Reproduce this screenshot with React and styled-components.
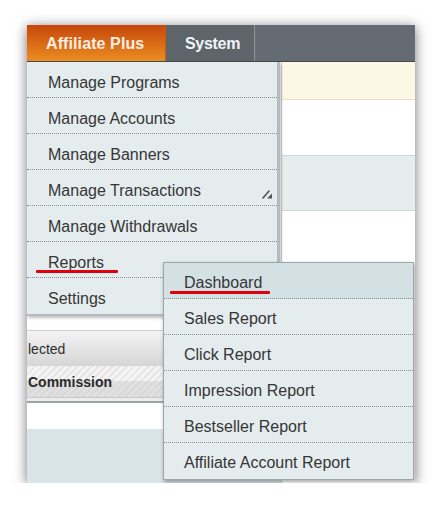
import styled, { createGlobalStyle } from 'styled-components'

const GlobalStyle = createGlobalStyle`
    html, body {
        margin: 0;
        padding: 0;
        background: #ffffff;
        font-family: 'Liberation Sans', Arial, sans-serif;
    }
`

const mainItems = [
    'Manage Programs',
    'Manage Accounts',
    'Manage Banners',
    'Manage Transactions',
    'Manage Withdrawals',
    'Reports',
    'Settings',
]

const reportItems = [
    'Dashboard',
    'Sales Report',
    'Click Report',
    'Impression Report',
    'Bestseller Report',
    'Affiliate Account Report',
]

function ResizeGlyph() {
    return (
        <Glyph width='11' height='10' viewBox='0 0 11 10'>
            <path d='M1 9 L7 2' stroke='#4f5659' strokeWidth='1.6' strokeLinecap='round' />
            <path d='M5 9.5 L10 4.5 L10 9.5 Z' fill='#4f5659' />
        </Glyph>
    )
}

export default function App() {
    return (
        <>
            <GlobalStyle />
            <Window>
                <NavBar>
                    <NavTab active>Affiliate Plus</NavTab>
                    <NavTab>System</NavTab>
                </NavBar>

                <Content>
                    <LeftPane>
                        <Blank height={268} />
                        <GridHeader>lected</GridHeader>
                        <FilterRow>Commission</FilterRow>
                        <Gap />
                        <Blank height={26} />
                        <Footer />
                    </LeftPane>
                    <RightPane>
                        <Notice />
                        <Blank height={55} />
                        <Band />
                        <Blank height={300} />
                    </RightPane>
                </Content>

                <MainMenu>
                    {mainItems.map((label, i) => (
                        <MenuItem key={label} last={i === mainItems.length - 1}>
                            <Label>
                                {label}
                                {label === 'Reports' && <Mark left={-12} top={16} width={82} />}
                            </Label>
                            {label === 'Manage Transactions' && <ResizeGlyph />}
                        </MenuItem>
                    ))}
                </MainMenu>

                <SubMenu>
                    {reportItems.map((label, i) => (
                        <SubItem key={label} active={i === 0} last={i === reportItems.length - 1}>
                            <Label>
                                {label}
                                {i === 0 && <Mark left={-14} top={17} width={100} />}
                            </Label>
                        </SubItem>
                    ))}
                </SubMenu>
            </Window>
        </>
    )
}

const Window = styled.div`
    position: relative;
    width: 388px;
    height: 458px;
    margin: 25px 0 0 27px;
    overflow: hidden;
    background: #ffffff;
    box-shadow: 0 2px 12px rgba(0, 0, 0, 0.55);
`

const NavBar = styled.div`
    display: flex;
    height: 36px;
    background: #646b72;
    border-bottom: 1px solid #454a4e;
`

const NavTab = styled.div`
    display: flex;
    align-items: center;
    padding: 1px 19px 0;
    width: ${({ active }) => (active ? '100px' : '50px')};
    font-size: 16px;
    font-weight: bold;
    color: ${({ active }) => (active ? '#fbeee2' : '#f1f4f6')};
    background: ${({ active }) => (active ? 'linear-gradient(#c6460a, #ec8d21)' : '#5d656b')};
    border-right: 1px solid ${({ active }) => (active ? '#c65d12' : '#8d949a')};
    letter-spacing: ${({ active }) => (active ? '0.1px' : '-0.3px')};
`

const Content = styled.div`
    display: grid;
    grid-template-columns: 254px 1fr;
    height: 421px;
`

const LeftPane = styled.div`
    display: flex;
    flex-direction: column;
`

const RightPane = styled.div`
    display: flex;
    flex-direction: column;
    border-left: 1px solid #c9d0d2;
`

const Blank = styled.div`
    height: ${({ height }) => height}px;
    flex-shrink: 0;
    background: #ffffff;
`

const GridHeader = styled.div`
    height: 35px;
    display: flex;
    align-items: center;
    padding-left: 1px;
    font-size: 14px;
    color: #2e2e2e;
    background: linear-gradient(#f3f3f3, #d6d6d6);
    border-top: 1px solid #cfcfcf;
`

const FilterRow = styled.div`
    height: 31px;
    display: flex;
    align-items: center;
    padding-left: 1px;
    font-size: 14px;
    font-weight: bold;
    color: #2b2b2b;
    border-bottom: 1px solid #c8c8c8;
    background:
        linear-gradient(rgba(255, 255, 255, 0) 50%, rgba(200, 200, 200, 0.45) 50%),
        repeating-linear-gradient(135deg, #e6e6e6 0 2px, #f4f4f4 2px 5px);
`

const Gap = styled.div`
    height: 3px;
    background: #ececec;
    border-bottom: 2px solid #9ea3a5;
`

const Footer = styled.div`
    flex: 1;
    background: #d9e4e7;
`

const Notice = styled.div`
    height: 37px;
    background: #fdf7e6;
    border-bottom: 1px solid #eadfc4;
`

const Band = styled.div`
    height: 54px;
    background: #e6eded;
    border-top: 1px solid #cfd8d9;
    border-bottom: 1px solid #cfd8d9;
`

const MainMenu = styled.div`
    position: absolute;
    left: 0;
    top: 37px;
    width: 250px;
    background: #e4ecee;
    border-right: 3px solid #b4bbbe;
    border-bottom: 2px solid #b4bbbe;
    box-shadow: 1px 2px 3px rgba(0, 0, 0, 0.25);
`

const MenuItem = styled.div`
    position: relative;
    height: 36px;
    box-sizing: border-box;
    display: flex;
    align-items: center;
    padding: 6px 0 0 21px;
    font-size: 16px;
    color: #363636;
    border-bottom: ${({ last }) => (last ? 'none' : '1px dotted #858c90')};
`

const SubMenu = styled.div`
    position: absolute;
    left: 136px;
    top: 237px;
    width: 249px;
    background: #e4ecee;
    border: 1px solid #9ea6a9;
    box-shadow: 1px 2px 4px rgba(0, 0, 0, 0.35);
`

const SubItem = styled.div`
    height: 36px;
    box-sizing: border-box;
    display: flex;
    align-items: center;
    padding: 4px 0 0 20px;
    font-size: 16px;
    color: #363636;
    background: ${({ active }) => (active ? '#d3e0e4' : '#e4ecee')};
    border-bottom: ${({ last }) => (last ? 'none' : '1px dotted #858c90')};
`

const Label = styled.span`
    position: relative;
`

const Mark = styled.span`
    position: absolute;
    left: ${({ left }) => left}px;
    top: ${({ top }) => top}px;
    width: ${({ width }) => width}px;
    height: 3px;
    border-radius: 1px;
    background: #e0000c;
`

const Glyph = styled.svg`
    position: absolute;
    right: 4px;
    bottom: 6px;
`
